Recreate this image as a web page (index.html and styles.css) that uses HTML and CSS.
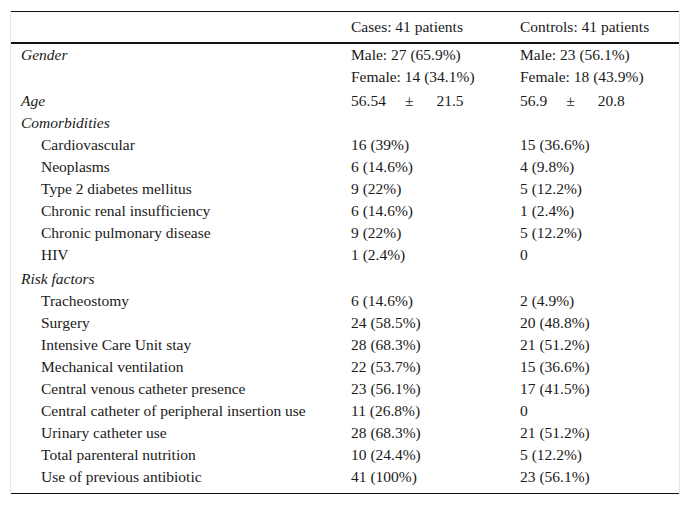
FILE: index.html
```html
<!DOCTYPE html>
<html>
<head>
<meta charset="utf-8">
<link rel="stylesheet" href="styles.css">
</head>
<body>
<div class="frame">
<table class="data">
<colgroup><col class="c1"><col class="c2"><col class="c3"></colgroup>
<thead>
<tr><th></th><th>Cases: 41 patients</th><th>Controls: 41 patients</th></tr>
</thead>
<tbody>
<tr><td class="group">Gender</td><td>Male: 27 (65.9%)<br>Female: 14 (34.1%)</td><td>Male: 23 (56.1%)<br>Female: 18 (43.9%)</td></tr>
<tr class="gap"><td class="group">Age</td><td>56.54<span class="pm">±</span>21.5</td><td>56.9<span class="pm">±</span>20.8</td></tr>
<tr><td class="group">Comorbidities</td><td></td><td></td></tr>
<tr><td class="sub">Cardiovascular</td><td>16 (39%)</td><td>15 (36.6%)</td></tr>
<tr><td class="sub">Neoplasms</td><td>6 (14.6%)</td><td>4 (9.8%)</td></tr>
<tr><td class="sub">Type 2 diabetes mellitus</td><td>9 (22%)</td><td>5 (12.2%)</td></tr>
<tr><td class="sub">Chronic renal insufficiency</td><td>6 (14.6%)</td><td>1 (2.4%)</td></tr>
<tr><td class="sub">Chronic pulmonary disease</td><td>9 (22%)</td><td>5 (12.2%)</td></tr>
<tr><td class="sub">HIV</td><td>1 (2.4%)</td><td>0</td></tr>
<tr class="gap"><td class="group">Risk factors</td><td></td><td></td></tr>
<tr><td class="sub">Tracheostomy</td><td>6 (14.6%)</td><td>2 (4.9%)</td></tr>
<tr><td class="sub">Surgery</td><td>24 (58.5%)</td><td>20 (48.8%)</td></tr>
<tr><td class="sub">Intensive Care Unit stay</td><td>28 (68.3%)</td><td>21 (51.2%)</td></tr>
<tr><td class="sub">Mechanical ventilation</td><td>22 (53.7%)</td><td>15 (36.6%)</td></tr>
<tr><td class="sub">Central venous catheter presence</td><td>23 (56.1%)</td><td>17 (41.5%)</td></tr>
<tr><td class="sub">Central catheter of peripheral insertion use</td><td>11 (26.8%)</td><td>0</td></tr>
<tr><td class="sub">Urinary catheter use</td><td>28 (68.3%)</td><td>21 (51.2%)</td></tr>
<tr><td class="sub">Total parenteral nutrition</td><td>10 (24.4%)</td><td>5 (12.2%)</td></tr>
<tr class="last"><td class="sub">Use of previous antibiotic</td><td>41 (100%)</td><td>23 (56.1%)</td></tr>
</tbody>
</table>
</div>
</body>
</html>
```
FILE: styles.css
```css
html, body {
  margin: 0;
  padding: 0;
  background: #fff;
}
body {
  padding: 11px 10px 0 10px;
}
.frame {
  border-left: 1px solid #e6e6e6;
  border-right: 1px solid #e6e6e6;
}
.data {
  width: 100%;
  table-layout: fixed;
  border-collapse: separate;
  border-spacing: 0;
  font-family: "Liberation Serif", "Times New Roman", serif;
  font-size: 15.5px;
  line-height: 22px;
  color: #1a1a1a;
}
.c1 { width: 330px; }
.c2 { width: 169px; }
.c3 { width: 169px; }
.data th {
  font-weight: normal;
  text-align: left;
  padding: 4px 0 4px 10px;
  border-top: 1px solid #111;
  border-bottom: 2px solid #111;
  white-space: nowrap;
}
.data td {
  padding: 0 0 0 10px;
  vertical-align: top;
  white-space: nowrap;
}
.data .group { font-style: italic; }
.data .sub { padding-left: 30px; }
.data tr.gap td { padding-top: 2px; }
.data tr.last td {
  padding-bottom: 5px;
  border-bottom: 1px solid #111;
}
.pm { margin: 0 23px 0 19px; }
```
